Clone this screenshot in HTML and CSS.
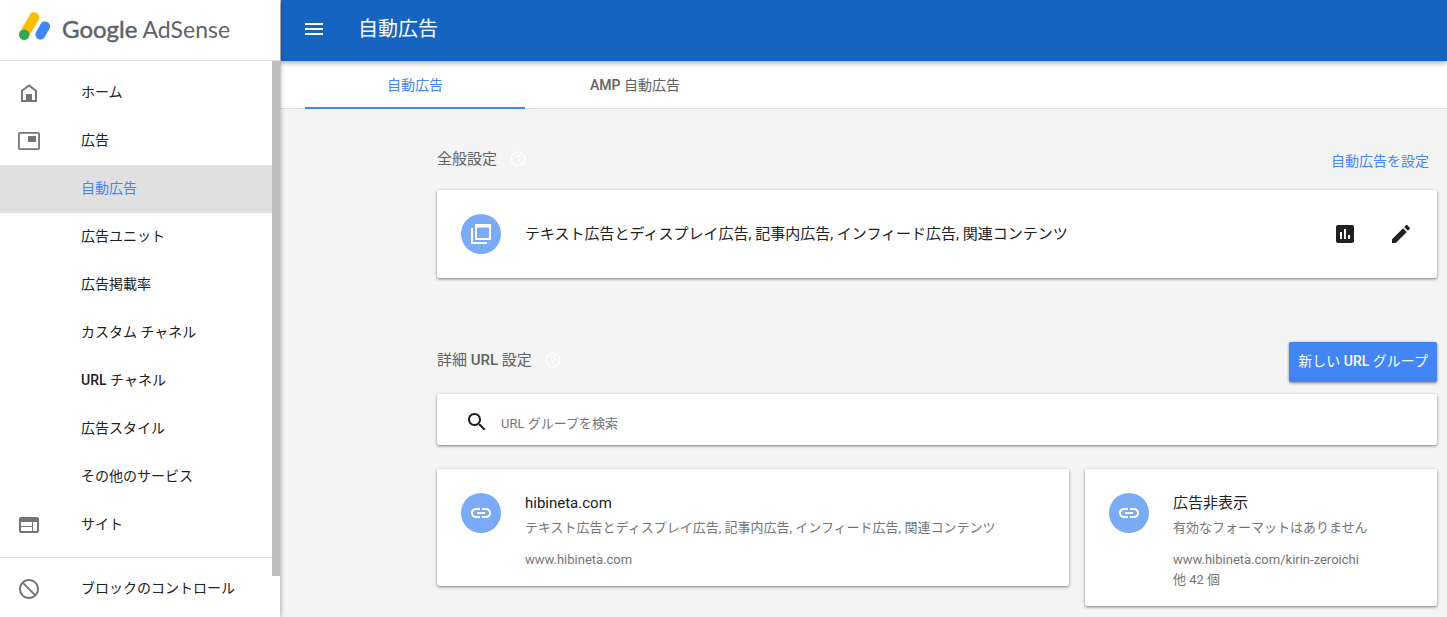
FILE: index.html
```html
<!DOCTYPE html>
<html lang="ja">
<head>
<meta charset="utf-8">
<meta name="viewport" content="width=device-width, initial-scale=1">
<title>自動広告 - Google AdSense</title>
<link rel="stylesheet" href="styles.css">
</head>
<body>
<div class="app">
  <aside class="sidebar">
    <a class="brand" href="#">
      <svg class="brand-mark" width="32" height="28" viewBox="0 0 32 28" aria-hidden="true">
        <path d="M5.2 22.6 15.2 5.2" stroke="#fbbc04" stroke-width="10" stroke-linecap="round"/>
        <path d="M21.4 22.6 26 14.4" stroke="#4285f4" stroke-width="10" stroke-linecap="round"/>
        <circle cx="5.2" cy="22.8" r="5.2" fill="#34a853"/>
      </svg>
      <span class="brand-name"><span class="brand-strong">Google</span> AdSense</span>
    </a>
    <div class="sidebar-body">
      <nav class="nav">
        <a class="nav-item" href="#">
          <svg class="icon" viewBox="0 0 24 24" aria-hidden="true"><path d="M5 20V9.800L12 4.500l7 5.300V20z" fill="none" stroke="currentColor" stroke-width="2"/><path d="M9 13h6v7H9z"/></svg>
          <span class="nav-label">ホーム</span>
        </a>
        <a class="nav-item" href="#">
          <svg class="icon" viewBox="0 0 24 24" aria-hidden="true"><rect x="1.9" y="3.9" width="20.2" height="16.2" rx="1.2" fill="none" stroke="currentColor" stroke-width="1.8"/><path d="M11 7h8v6h-8z"/></svg>
          <span class="nav-label">広告</span>
        </a>
        <a class="nav-item nav-item-active" href="#" aria-current="page"><span class="nav-label">自動広告</span></a>
        <a class="nav-item" href="#"><span class="nav-label">広告ユニット</span></a>
        <a class="nav-item" href="#"><span class="nav-label">広告掲載率</span></a>
        <a class="nav-item" href="#"><span class="nav-label">カスタム チャネル</span></a>
        <a class="nav-item" href="#"><span class="nav-label"><span class="latin">URL</span> チャネル</span></a>
        <a class="nav-item" href="#"><span class="nav-label">広告スタイル</span></a>
        <a class="nav-item" href="#"><span class="nav-label">その他のサービス</span></a>
        <a class="nav-item" href="#">
          <svg class="icon" viewBox="0 0 24 24" aria-hidden="true"><path d="M20 4H4c-1.100 0-1.990.9-1.990 2L2 18c0 1.100.9 2 2 2h16c1.100 0 2-.9 2-2V6c0-1.100-.9-2-2-2zm-5 14H4v-4h11v4zm0-5H4V9h11v4zm5 5h-4V9h4v9z"/></svg>
          <span class="nav-label">サイト</span>
        </a>
        <hr class="nav-divider">
        <a class="nav-item" href="#">
          <svg class="icon" viewBox="0 0 24 24" aria-hidden="true"><path d="M12 2C6.480 2 2 6.480 2 12s4.480 10 10 10 10-4.480 10-10S17.520 2 12 2zM4 12c0-4.420 3.580-8 8-8 1.850 0 3.550.63 4.900 1.690L5.690 16.900C4.630 15.550 4 13.850 4 12zm8 8c-1.850 0-3.550-.63-4.900-1.690L18.310 7.100C19.370 8.450 20 10.150 20 12c0 4.420-3.580 8-8 8z" transform="rotate(90 12 12)"/></svg>
          <span class="nav-label">ブロックのコントロール</span>
        </a>
      </nav>
      <div class="scroll-track"><div class="scroll-thumb"></div></div>
    </div>
  </aside>

  <div class="main">
    <header class="topbar">
      <button class="icon-button" type="button" aria-label="メニュー">
        <svg class="icon" viewBox="0 0 24 24" aria-hidden="true"><path d="M3 18h18v-2H3v2zm0-5h18v-2H3v2zm0-7v2h18V6H3z"/></svg>
      </button>
      <h1 class="page-title">自動広告</h1>
    </header>
    <nav class="tabs">
      <a class="tab tab-active" href="#" aria-current="page">自動広告</a>
      <a class="tab" href="#"><span class="latin">AMP</span> 自動広告</a>
    </nav>

    <main class="content">
      <section class="section">
        <div class="section-head section-head-general">
          <h2 class="section-title">全般設定</h2>
          <button class="icon-button help" type="button" aria-label="ヘルプ">
            <svg class="icon-help" viewBox="0 0 24 24" aria-hidden="true"><path d="M11 18h2v-2h-2v2zm1-16C6.480 2 2 6.480 2 12s4.480 10 10 10 10-4.480 10-10S17.520 2 12 2zm0 18c-4.410 0-8-3.590-8-8s3.590-8 8-8 8 3.590 8 8-3.590 8-8 8zm0-14c-2.210 0-4 1.790-4 4h2c0-1.100.9-2 2-2s2 .9 2 2c0 2-3 1.750-3 5h2c0-2.250 3-2.500 3-5 0-2.210-1.790-4-4-4z"/></svg>
          </button>
          <a class="setup-link" href="#">自動広告を設定</a>
        </div>
        <div class="card general-card">
          <span class="avatar">
            <svg class="icon" viewBox="0 0 24 24" aria-hidden="true"><path d="M7 3h14v14H7zM3 6v15h15" fill="none" stroke="currentColor" stroke-width="2"/><path d="M7 3h14v2.500H7z"/></svg>
          </span>
          <p class="card-title general-text">テキスト広告とディスプレイ広告, 記事内広告, インフィード広告, 関連コンテンツ</p>
          <button class="icon-button" type="button" aria-label="レポート">
            <svg class="icon" viewBox="0 0 24 24" aria-hidden="true"><path d="M19 3H5c-1.100 0-2 .9-2 2v14c0 1.100.9 2 2 2h14c1.100 0 2-.9 2-2V5c0-1.100-.9-2-2-2zM9 17H7v-7h2v7zm4 0h-2V7h2v10zm4 0h-2v-4h2v4z"/></svg>
          </button>
          <button class="icon-button" type="button" aria-label="編集">
            <svg class="icon" viewBox="0 0 24 24" aria-hidden="true"><path d="M3 17.250V21h3.750L17.810 9.940l-3.750-3.750L3 17.250zM20.710 7.040c.39-.39.39-1.020 0-1.410l-2.340-2.340c-.39-.39-1.020-.39-1.410 0l-1.830 1.830 3.750 3.750 1.830-1.830z"/></svg>
          </button>
        </div>
      </section>

      <section class="section">
        <div class="section-head">
          <h2 class="section-title">詳細 <span class="latin">URL</span> 設定</h2>
          <button class="icon-button help" type="button" aria-label="ヘルプ">
            <svg class="icon-help" viewBox="0 0 24 24" aria-hidden="true"><path d="M11 18h2v-2h-2v2zm1-16C6.480 2 2 6.480 2 12s4.480 10 10 10 10-4.480 10-10S17.520 2 12 2zm0 18c-4.410 0-8-3.590-8-8s3.590-8 8-8 8 3.590 8 8-3.590 8-8 8zm0-14c-2.210 0-4 1.790-4 4h2c0-1.100.9-2 2-2s2 .9 2 2c0 2-3 1.750-3 5h2c0-2.250 3-2.500 3-5 0-2.210-1.790-4-4-4z"/></svg>
          </button>
          <button class="primary-button" type="button">新しい <span class="latin">URL</span> グループ</button>
        </div>
        <label class="card search">
          <svg class="icon" viewBox="0 0 24 24" aria-hidden="true"><path d="M15.500 14h-.79l-.28-.27C15.410 12.590 16 11.110 16 9.500 16 5.910 13.090 3 9.500 3S3 5.910 3 9.500 5.910 16 9.500 16c1.610 0 3.090-.59 4.230-1.570l.27.28v.79l5 4.990L20.490 19l-4.990-5zm-6 0C7.010 14 5 11.990 5 9.500S7.010 5 9.500 5 14 7.010 14 9.500 11.990 14 9.500 14z"/></svg>
          <input class="search-input" type="text" placeholder="URL グループを検索" aria-label="URL グループを検索">
        </label>
        <div class="groups">
          <article class="card group">
            <span class="avatar">
              <svg class="icon" viewBox="0 0 24 24" aria-hidden="true"><path d="M3.900 12c0-1.710 1.390-3.100 3.100-3.100h4V7H7c-2.760 0-5 2.240-5 5s2.240 5 5 5h4v-1.900H7c-1.710 0-3.100-1.390-3.100-3.100zM8 13h8v-2H8v2zm9-6h-4v1.900h4c1.710 0 3.100 1.390 3.100 3.100s-1.390 3.100-3.100 3.100h-4V17h4c2.760 0 5-2.240 5-5s-2.240-5-5-5z"/></svg>
            </span>
            <div class="group-text">
              <h3 class="card-title">hibineta.com</h3>
              <p class="detail">テキスト広告とディスプレイ広告, 記事内広告, インフィード広告, 関連コンテンツ</p>
              <p class="detail urls">www.hibineta.com</p>
            </div>
          </article>
          <article class="card group">
            <span class="avatar">
              <svg class="icon" viewBox="0 0 24 24" aria-hidden="true"><path d="M3.900 12c0-1.710 1.390-3.100 3.100-3.100h4V7H7c-2.760 0-5 2.240-5 5s2.240 5 5 5h4v-1.900H7c-1.710 0-3.100-1.390-3.100-3.100zM8 13h8v-2H8v2zm9-6h-4v1.900h4c1.710 0 3.100 1.390 3.100 3.100s-1.390 3.100-3.100 3.100h-4V17h4c2.760 0 5-2.240 5-5s-2.240-5-5-5z"/></svg>
            </span>
            <div class="group-text">
              <h3 class="card-title">広告非表示</h3>
              <p class="detail">有効なフォーマットはありません</p>
              <p class="detail urls">www.hibineta.com/kirin-zeroichi<br>他 42 個</p>
            </div>
          </article>
        </div>
      </section>
    </main>
  </div>
</div>
</body>
</html>
```
FILE: styles.css
```css
* { box-sizing: border-box; }

body {
  margin: 0;
  background: #f4f4f4;
  color: #212121;
  font-family: Roboto, "Noto Sans CJK JP", sans-serif;
  font-size: 14px;
  line-height: 20px;
}

h1, h2, h3, p { margin: 0; font-weight: 400; }
a { color: inherit; text-decoration: none; }
button { border: 0; padding: 0; background: none; color: inherit; font: inherit; cursor: pointer; }
svg { display: block; flex: none; fill: currentColor; }
.latin { font-weight: 500; }
.brand-mark { fill: none; }
.icon { width: 24px; height: 24px; }
.icon-help { width: 18px; height: 18px; }
.icon-button { display: flex; flex: none; }

.app {
  display: grid;
  grid-template-columns: 280px 1fr;
  height: 100vh;
  overflow: hidden;
}

/* Sidebar */
.sidebar {
  z-index: 2;
  display: flex;
  flex-direction: column;
  min-height: 0;
  background: #fff;
  box-shadow: 0 0 5px rgba(0, 0, 0, .4);
}
.brand {
  display: flex;
  flex: none;
  align-items: flex-start;
  gap: 11px;
  height: 61px;
  padding: 12px 0 0 19px;
  border-bottom: 1px solid #e0e0e0;
}
.brand-name {
  color: #5f6368;
  font-family: Lato, sans-serif;
  font-size: 23px;
  line-height: 34px;
  white-space: nowrap;
}
.brand-strong { font-size: 24px; -webkit-text-stroke: 0.5px #5f6368; }
.sidebar-body { display: flex; flex: 1; min-height: 0; }
.nav { flex: 1; padding-top: 8px; overflow: hidden; }
.nav-item {
  display: grid;
  grid-template-columns: 24px 1fr;
  column-gap: 40px;
  align-items: center;
  height: 48px;
  padding-left: 17px;
}
.nav-label { grid-column: 2; padding-bottom: 2px; }
.nav-item .icon { color: #757575; }
.nav-item-active { background: #e0e0e0; color: #4285f4; }
.nav-divider { margin: 8px 0 7px; border: 0; border-top: 1px solid #e0e0e0; }
.scroll-track { width: 8px; }
.scroll-thumb { height: 92.6%; background: #bdbdbd; }

/* Header and tabs */
.main { min-width: 0; padding-left: 1px; }
.topbar {
  position: relative;
  display: flex;
  align-items: center;
  gap: 32px;
  height: 61px;
  padding: 0 21px 4px;
  background: #1565c0;
  color: #fff;
  box-shadow: 0 1px 6px rgba(0, 0, 0, .45);
}
.page-title { font-size: 20px; line-height: 28px; }
.tabs {
  display: flex;
  height: 48px;
  padding-left: 24px;
  border-bottom: 1px solid #e0e0e0;
  background: #fff;
}
.tab {
  width: 220px;
  height: 48px;
  padding-top: 14px;
  color: #616161;
  text-align: center;
}
.tab-active { border-bottom: 2px solid #4285f4; color: #4285f4; }

/* Content */
.content {
  display: flex;
  flex-direction: column;
  gap: 64px;
  padding: 32px 10px 11px 156px;
}
.section-head { display: flex; align-items: center; height: 40px; margin-bottom: 12px; }
.section-head-general { margin-bottom: 9px; }
.section-title {
  padding-bottom: 4px;
  color: #616161;
  font-size: 15px;
}
.help { margin: 0 auto 4px 12px; color: #fff; }
.setup-link { padding-right: 8px; color: #4285f4; }
.card {
  display: flex;
  border-radius: 2px;
  background: #fff;
  box-shadow: 0 1px 3px rgba(0, 0, 0, .5);
}
.avatar {
  display: grid;
  flex: none;
  place-items: center;
  width: 40px;
  height: 40px;
  border-radius: 50%;
  background: #7baaf7;
  color: #fff;
}
.general-card { align-items: center; gap: 32px; padding: 24px; }
.general-text { flex: 1; margin-left: -8px; }
.card-title { font-size: 15px; line-height: 20px; }

.primary-button {
  height: 40px;
  padding: 0 9px 2px;
  border-radius: 2px;
  background: #4285f4;
  box-shadow: 0 1px 3px rgba(0, 0, 0, .5);
  color: #fff;
}
.search { align-items: center; gap: 12px; height: 51px; padding: 4px 24px 0 28px; }
.search-input {
  flex: 1;
  height: 24px;
  padding: 4px 0 0;
  border: 0;
  outline: 0;
  background: none;
  font: inherit;
  font-size: 13px;
}
.search-input::placeholder { color: #757575; }
.groups {
  display: grid;
  grid-template-columns: 632fr 352fr;
  gap: 16px;
  align-items: start;
  margin-top: 24px;
}
.group { gap: 24px; padding: 24px 24px 16px; }
.group-text { min-width: 0; }
.detail { margin-top: 5px; color: #757575; font-size: 13px; }
.urls { margin-top: 12px; }
```
